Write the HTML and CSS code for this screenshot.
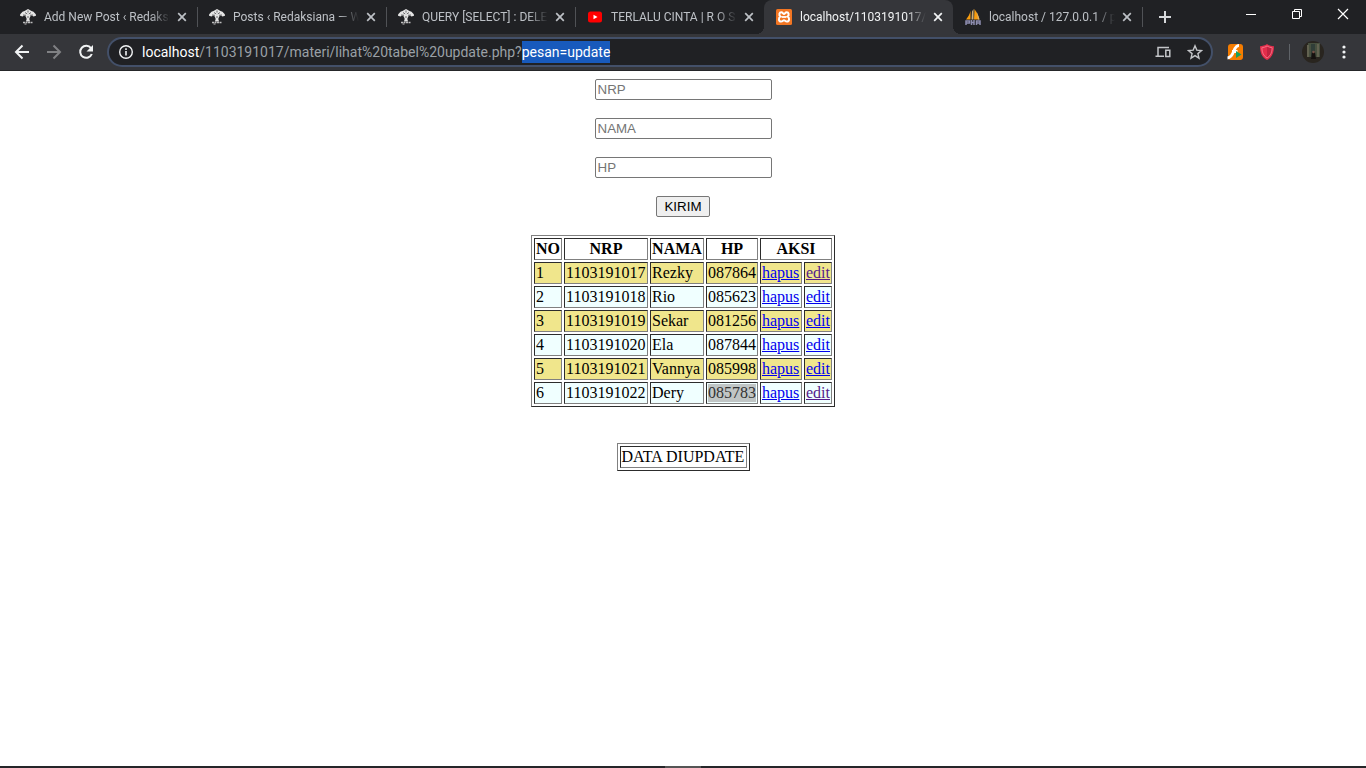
FILE: index.html
```html
<!DOCTYPE html>
<html lang="id">
<head>
  <meta charset="utf-8">
  <title>localhost/1103191017/materi</title>
  <meta name="viewport" content="width=device-width, initial-scale=1.0">
  <link rel="stylesheet" href="styles.css">
</head>
<body>
  <!-- shared icons -->
  <svg class="defs" aria-hidden="true">
    <symbol id="tree" viewBox="0 0 16 16">
      <path fill="#e4e4e4" d="M4.500 2 8 0l3.500 2 2 .8 2.300 2.400.2 1.600-2.500.8-1.700-1-1.600.8-.9 2.600.8 2.500H5.900l.8-2.500-.9-2.600-1.600-.8-1.700 1L0 6.800l.2-1.600 2.300-2.400z"/>
      <path fill="none" stroke="#35363a" stroke-width=".7" d="M5 3.500 7.200 5M11 3.500 8.800 5M3 6l3 .3M13 6l-3 .3M8 1.500v2M8 7v2"/>
      <path fill="none" stroke="#bdbdbd" stroke-width="1.500" stroke-dasharray="2 .5" d="M3 13.500h10"/>
      <path fill="none" stroke="#bdbdbd" d="M4.500 15h2"/>
    </symbol>
    <symbol id="cross" viewBox="0 0 10 10">
      <path fill="none" stroke="currentColor" stroke-width="1.700" d="m1.200 1.200 7.600 7.600m0-7.600L1.200 8.800"/>
    </symbol>
  </svg>

  <header class="browser">
    <div class="tab-strip">
      <div class="tabs">
        <div class="tab">
          <svg class="favicon"><use href="#tree"/></svg>
          <span class="tab-title">Add New Post ‹ Redaksi</span>
          <button class="tab-close" aria-label="Close tab"><svg><use href="#cross"/></svg></button>
        </div>
        <div class="tab">
          <svg class="favicon"><use href="#tree"/></svg>
          <span class="tab-title">Posts ‹ Redaksiana — W</span>
          <button class="tab-close" aria-label="Close tab"><svg><use href="#cross"/></svg></button>
        </div>
        <div class="tab">
          <svg class="favicon"><use href="#tree"/></svg>
          <span class="tab-title">QUERY [SELECT] : DELET</span>
          <button class="tab-close" aria-label="Close tab"><svg><use href="#cross"/></svg></button>
        </div>
        <div class="tab before-active">
          <svg class="favicon" viewBox="0 0 16 16">
            <rect x="1" y="2.500" width="14" height="11" rx="2.500" fill="#f00"/>
            <path fill="#fff" d="m6.500 5.800 4 2.200-4 2.200z"/>
          </svg>
          <span class="tab-title">TERLALU CINTA | R O S</span>
          <button class="tab-close" aria-label="Close tab"><svg><use href="#cross"/></svg></button>
        </div>
        <div class="tab active">
          <svg class="favicon" viewBox="0 0 16 16">
            <rect width="16" height="16" rx="1.500" fill="#f37623"/>
            <path fill="none" stroke="#fff" stroke-width="2" d="M5.200 3.300c-1.800 0-2.700 2.700-.8 4.200-2.300 1.500-1.800 5 .6 5 1.800 0 2-1.300 3-1.300s1.200 1.300 3 1.300c2.400 0 2.900-3.500.6-5 1.900-1.500 1-4.200-.8-4.200S9 4.900 8 4.900 7 3.300 5.200 3.300z"/>
            <path stroke="#fff" stroke-width="1.800" d="M5.500 8h5"/>
          </svg>
          <span class="tab-title">localhost/1103191017/r</span>
          <button class="tab-close" aria-label="Close tab"><svg><use href="#cross"/></svg></button>
        </div>
        <div class="tab">
          <svg class="favicon" viewBox="0 0 16 16">
            <path fill="#f89c0e" d="M5.500 1.500v9H1C3 8 5 5 5.500 1.500zM9.500 0c1.500 3 4.500 6 5 10.500H9z"/>
            <path fill="#d2b27a" d="M7 2.500 8.500 0v10.500H6.500zM11.500 2l3 8.500h-1.500z"/>
            <path fill="none" stroke="#8c8cae" stroke-width="1.500" d="M1 16v-4h3.500v2H1M6.500 11v5m0-2.500H9m0-2.500v5m2.500 0v-4H15v4m-3.500-2H15"/>
          </svg>
          <span class="tab-title">localhost / 127.0.0.1 / p</span>
          <button class="tab-close" aria-label="Close tab"><svg><use href="#cross"/></svg></button>
        </div>
      </div>
      <button class="new-tab" aria-label="New tab">
        <svg viewBox="0 0 14 14"><path stroke="#d5d7da" stroke-width="2" d="M7 1v12M1 7h12"/></svg>
      </button>
      <div class="window-buttons">
        <button aria-label="Minimize"><svg viewBox="0 0 12 12"><path stroke="#fff" d="M1 6.500h10"/></svg></button>
        <button aria-label="Restore"><svg viewBox="0 0 12 12"><path fill="none" stroke="#fff" d="M1.500 3.500h7v7h-7zM3.500 3.500v-2h7v7h-2"/></svg></button>
        <button aria-label="Close"><svg viewBox="0 0 12 12"><path stroke="#fff" stroke-width="1.200" d="m1 1 10 10M11 1 1 11"/></svg></button>
      </div>
    </div>

    <div class="toolbar">
      <div class="nav-buttons">
        <button aria-label="Back"><svg viewBox="0 0 16 16"><path fill="none" stroke="#f1f3f4" stroke-width="2" d="M15 8H2m6.500-6.500L2 8l6.500 6.500"/></svg></button>
        <button aria-label="Forward"><svg viewBox="0 0 16 16"><path fill="none" stroke="#808184" stroke-width="2" d="M1 8h13M7.500 1.500 14 8l-6.500 6.500"/></svg></button>
        <button aria-label="Reload"><svg viewBox="0 0 16 16"><path fill="none" stroke="#f1f3f4" stroke-width="2" d="M13 4.200A6 6 0 1 0 13.800 10"/><path fill="#f1f3f4" d="M15 1v6.500H8.500z"/></svg></button>
      </div>
      <div class="omnibox">
        <svg class="info" viewBox="0 0 16 16"><circle cx="8" cy="8" r="6.300" fill="none" stroke="#f1f3f4" stroke-width="1.400"/><path stroke="#f1f3f4" stroke-width="1.600" d="M8 7v4.500M8 4.300V6"/></svg>
        <div class="url" role="textbox" aria-label="Address" contenteditable="true" spellcheck="false"><b>localhost</b>/1103191017/materi/lihat%20tabel%20update.php?<mark>pesan=update</mark></div>
        <button aria-label="Send to your devices"><svg viewBox="0 0 16 16"><path fill="none" stroke="#c4c6c9" stroke-width="1.500" d="M14 3.500H3v8M.5 12.300H9M10.800 6.200h4v6.300h-4z"/></svg></button>
        <button aria-label="Bookmark this page"><svg viewBox="0 0 16 16"><path fill="none" stroke="#c4c6c9" stroke-width="1.400" d="m8 1.800 1.800 4.300 4.700.4-3.600 3.100 1.100 4.600L8 11.700l-4 2.500 1.100-4.600L1.500 6.500l4.700-.4z"/></svg></button>
      </div>
      <div class="extensions">
        <button aria-label="Flash player">
          <svg viewBox="0 0 16 16"><rect x="1" width="15" height="16" rx="3" fill="#f57c00"/><path fill="none" stroke="#fff" stroke-width="2.800" d="M12 1.500C5.500 1.500 8 13.500.5 14M5 7.500h5.500"/><path fill="#16a05d" d="m9 7 5.500 3.500L9 14z"/></svg>
        </button>
        <button class="shield" aria-label="Shield">
          <svg viewBox="0 0 16 16"><path fill="#e22d4b" d="M8 0c2 1.500 4.500 2 7 2.300C15 9 13 13.500 8 16 3 13.500 1 9 1 2.300 3.500 2 6 1.500 8 0z"/><path fill="#bf2340" d="M8 2v12c3.500-2 5-5.500 5.200-10.200C11 3.500 9.500 3 8 2z"/><path fill="none" stroke="#fa8091" stroke-width=".8" d="M8 2c1.500 1 3 1.500 5.200 1.800C13 8.500 11.500 12 8 14c-3.500-2-5-5.500-5.200-10.200C5 3.500 6.500 3 8 2z"/></svg>
        </button>
        <span class="divider"></span>
        <button class="profile" aria-label="Profile">
          <svg viewBox="0 0 22 22"><circle cx="11" cy="11" r="11" fill="#29251f"/><path fill="#47503f" d="M6 2h12v14H6z"/><path fill="#626250" d="M5 4h2v12H5zM15 3h2v13h-2z"/><path fill="#303e38" d="M9 3h4v14H9z"/><path fill="#15110f" d="M10 11h3l1 7H9z"/><circle cx="11.500" cy="11" r="1.300" fill="#755146"/></svg>
        </button>
        <button aria-label="Menu"><svg viewBox="0 0 16 16"><g fill="#f1f3f4"><circle cx="8" cy="3" r="1.600"/><circle cx="8" cy="8" r="1.600"/><circle cx="8" cy="13" r="1.600"/></g></svg></button>
      </div>
    </div>
  </header>

  <main>
    <form>
      <input type="text" name="nrp" placeholder="NRP" aria-label="NRP">
      <input type="text" name="nama" placeholder="NAMA" aria-label="NAMA">
      <input type="text" name="hp" placeholder="HP" aria-label="HP">
      <button type="submit">KIRIM</button>
    </form>

    <table class="data">
      <colgroup>
        <col class="no"><col class="nrp"><col class="nama"><col class="hp"><col class="hapus"><col class="edit">
      </colgroup>
      <tbody>
      <tr><th>NO</th><th>NRP</th><th>NAMA</th><th>HP</th><th colspan="2">AKSI</th></tr>
      <tr><td>1</td><td>1103191017</td><td>Rezky</td><td>087864</td><td><a href="#hapus1">hapus</a></td><td><a class="seen" href="#edit1">edit</a></td></tr>
      <tr><td>2</td><td>1103191018</td><td>Rio</td><td>085623</td><td><a href="#hapus2">hapus</a></td><td><a href="#edit2">edit</a></td></tr>
      <tr><td>3</td><td>1103191019</td><td>Sekar</td><td>081256</td><td><a href="#hapus3">hapus</a></td><td><a href="#edit3">edit</a></td></tr>
      <tr><td>4</td><td>1103191020</td><td>Ela</td><td>087844</td><td><a href="#hapus4">hapus</a></td><td><a href="#edit4">edit</a></td></tr>
      <tr><td>5</td><td>1103191021</td><td>Vannya</td><td>085998</td><td><a href="#hapus5">hapus</a></td><td><a href="#edit5">edit</a></td></tr>
      <tr><td>6</td><td>1103191022</td><td>Dery</td><td><span class="selected">085783</span></td><td><a href="#hapus6">hapus</a></td><td><a class="seen" href="#edit6">edit</a></td></tr>
      </tbody>
    </table>

    <table class="message">
      <tr><td>DATA DIUPDATE</td></tr>
    </table>
  </main>

  <footer class="taskbar"><span></span></footer>
</body>
</html>
```
FILE: styles.css
```css
* {
  box-sizing: border-box;
}

body {
  margin: 0;
  min-height: 100vh;
  display: flex;
  flex-direction: column;
  background: #fff;
  color: #000;
  font: 16px/18px "Liberation Serif", "Times New Roman", serif;
}

.defs {
  display: none;
}

/* browser bar */
.browser {
  background: #202124;
  font-family: Roboto, "Segoe UI", sans-serif;
}

.browser button {
  display: flex;
  align-items: center;
  justify-content: center;
  flex: none;
  padding: 0;
  border: 0;
  background: none;
}

.browser svg {
  width: 16px;
  height: 16px;
  flex: none;
}

.tab-strip {
  display: flex;
  height: 34px;
  padding-left: 8px;
}

.tabs {
  display: flex;
  flex: 0 1 1134px;
  min-width: 0;
}

.tab {
  position: relative;
  display: flex;
  align-items: center;
  flex: 1;
  min-width: 0;
  padding: 0 10px 0 12px;
  color: #bdc1c6;
}

.tab:not(.active):not(.before-active)::after {
  content: "";
  position: absolute;
  right: -1px;
  top: 7px;
  width: 1px;
  height: 20px;
  background: #505256;
}

.tab.active {
  background: #35363a;
  border-radius: 8px 8px 0 0;
  color: #f1f3f4;
}

/* curved feet of the active tab */
.tab.active::before,
.tab.active::after {
  content: "";
  position: absolute;
  bottom: 0;
  width: 8px;
  height: 8px;
}

.tab.active::before {
  left: -8px;
  background: radial-gradient(circle at 0 0, #202124 8px, #35363a 8px);
}

.tab.active::after {
  right: -8px;
  background: radial-gradient(circle at 100% 0, #202124 8px, #35363a 8px);
}

.tab-title {
  flex: 1;
  min-width: 0;
  margin: 0 7px 0 8px;
  overflow: hidden;
  white-space: nowrap;
  font-size: 12px;
  line-height: 18px;
  -webkit-mask-image: linear-gradient(to left, transparent, #000 20px);
  mask-image: linear-gradient(to left, transparent, #000 20px);
}

.tab-close {
  color: inherit;
}

.browser .tab-close svg {
  width: 10px;
  height: 10px;
}

.new-tab {
  width: 46px;
}

.browser .new-tab svg {
  width: 14px;
  height: 14px;
}

.window-buttons {
  display: flex;
  margin-left: auto;
}

.window-buttons button {
  width: 46px;
  height: 28px;
}

.browser .window-buttons svg {
  width: 12px;
  height: 12px;
}

.toolbar {
  display: flex;
  align-items: center;
  height: 37px;
  padding: 0 14px 1px;
  background: #35363a;
  border-bottom: 1px solid #252629;
}

.nav-buttons {
  display: flex;
  gap: 16px;
  margin-right: 13px;
}

.omnibox {
  display: flex;
  align-items: center;
  flex: 1;
  min-width: 0;
  height: 30px;
  padding: 0 8px 0 9px;
  gap: 16px;
  border: 2px solid #435069;
  border-radius: 15px;
  background: #202124;
}

.url {
  flex: 1;
  min-width: 0;
  margin-left: -8px;
  overflow: hidden;
  white-space: nowrap;
  outline: none;
  color: #9aa0a6;
  font-size: 14px;
  line-height: 22px;
}

.url b {
  color: #fff;
  font-weight: normal;
}

.url mark {
  display: inline-block;
  background: #185abc;
  color: #fff;
}

.extensions {
  display: flex;
  align-items: center;
  gap: 12px;
  margin-left: 14px;
}

.shield {
  margin: 0 2px 0 4px;
}

.divider {
  width: 1px;
  height: 16px;
  background: #5f6368;
}

.browser .profile svg {
  width: 22px;
  height: 22px;
}

/* page */
main {
  flex: 1;
  display: flex;
  flex-direction: column;
  align-items: center;
  padding: 8px;
}

form {
  display: flex;
  flex-direction: column;
  align-items: center;
  gap: 18px;
  margin-bottom: 18px;
}

form input,
form button {
  height: 21px;
  border: 1px solid #767676;
  border-radius: 2px;
  font-family: "Liberation Sans", Arial, sans-serif;
}

form input {
  width: 177px;
  padding: 1px 2px;
  background: #fff;
}

form input::placeholder {
  color: #757575;
}

form button {
  width: 54px;
  padding: 0;
  background: #efefef;
  color: #000;
}

table {
  border: 1px solid;
  border-color: #808080 #2c2c2c #2c2c2c #808080;
  border-spacing: 2px;
}

th,
td {
  padding: 1px;
  border: 1px solid;
  border-color: #2c2c2c #808080 #808080 #2c2c2c;
}

.data {
  margin-bottom: 36px;
}

.no,
.edit {
  width: 28px;
}

.nrp {
  width: 84px;
}

.nama {
  width: 54px;
}

.hp {
  width: 52px;
}

.hapus {
  width: 42px;
}

.data tr:nth-child(even) {
  background: khaki;
}

.data tr:nth-child(odd):not(:first-child) {
  background: azure;
}

a {
  color: #0000ee;
}

a.seen {
  color: #551a8b;
}

.selected {
  display: block;
  background: #c0c5c5;
  color: #323232;
}

.message {
  width: 133px;
}

/* edge of the hidden taskbar */
.taskbar {
  display: flex;
  justify-content: center;
  height: 2px;
  background: #252629;
}

.taskbar span {
  width: 36px;
  background: #555;
}
```
